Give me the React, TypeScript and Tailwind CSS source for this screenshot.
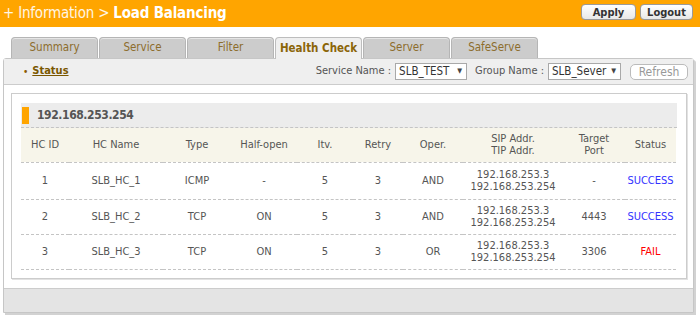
import React from "react";

const tabs = ["Summary", "Service", "Filter", "Health Check", "Server", "SafeServe"];

const rows = [
  { id: "1", name: "SLB_HC_1", type: "ICMP", half: "-", itv: "5", retry: "3", oper: "AND", port: "-", status: "SUCCESS", h: "h-[37px]" },
  { id: "2", name: "SLB_HC_2", type: "TCP", half: "ON", itv: "5", retry: "3", oper: "AND", port: "4443", status: "SUCCESS", h: "h-[35px]" },
  { id: "3", name: "SLB_HC_3", type: "TCP", half: "ON", itv: "5", retry: "3", oper: "OR", port: "3306", status: "FAIL", h: "h-[35px]" },
];

const widths = [48, 94, 68, 66, 56, 50, 60, 100, 62, 51];

export default function App() {
  return (
    <div className="w-[700px] h-[325px] bg-white overflow-hidden font-['DejaVu_Sans_Condensed','DejaVu_Sans',sans-serif] [font-stretch:condensed] text-[11px] text-[#555]">
      {/* Header */}
      <div className="h-[27px] bg-[#ffa500] flex items-center justify-between pl-[3px] pr-[7px]">
        <div className="text-[15px] leading-none text-white/90 tracking-[-0.2px]">
          + Information &gt; <span className="font-bold text-white">Load Balancing</span>
        </div>
        <div className="flex gap-[4px] mb-[3px]">
          <button className="w-[55px] h-[16px] rounded-[4px] border border-[#9a9a9a] bg-gradient-to-b from-white to-[#e8e8e8] text-[11px] font-bold text-[#333] leading-none flex items-center justify-center">
            Apply
          </button>
          <button className="w-[53px] h-[16px] rounded-[4px] border border-[#9a9a9a] bg-gradient-to-b from-white to-[#e8e8e8] text-[11px] font-bold text-[#333] leading-none flex items-center justify-center">
            Logout
          </button>
        </div>
      </div>

      {/* Tabs */}
      <div className="flex items-end gap-[1px] pl-[11px] mt-[10px] h-[21px] relative z-10">
        {tabs.map((t) =>
          t === "Health Check" ? (
            <div
              key={t}
              className="w-[87px] h-[22px] -mb-px rounded-t-[4px] border border-b-0 border-[#bdbdbd] bg-[#efefef] flex items-center justify-center text-[11.5px] font-bold text-[#8b6508]"
            >
              {t}
            </div>
          ) : (
            <div
              key={t}
              className="w-[87px] h-[21px] rounded-t-[4px] border border-b-0 border-[#b5b5b5] bg-[#cccccc] shadow-[inset_0_1px_0_#e6e6e6] flex items-center justify-center text-[11.5px] text-[#8c6d2c]"
            >
              {t}
            </div>
          )
        )}
      </div>

      {/* Panel */}
      <div className="ml-[3px] w-[691px] border border-[#c6c6c6] rounded-t-[3px] shadow-[2px_2px_0_#d2d2d2] bg-white">
        {/* Status bar */}
        <div className="h-[26px] bg-[#efefef] border-b border-[#cccccc] flex items-center pl-[19px] pr-[5px]">
          <div className="flex items-center gap-[4px]">
            <span className="text-[#8b5a00] text-[10px]">•</span>
            <span className="font-bold underline text-[#7a5700]">Status</span>
          </div>
          <div className="ml-auto flex items-center">
            <span className="text-[#555] mr-[4px]">Service Name :</span>
            <div className="w-[72px] h-[17px] border border-[#a9a9a9] bg-white flex items-center justify-between pl-[3px] pr-[4px] text-[11.5px] text-[#333] leading-none">
              <span>SLB_TEST</span>
              <span className="text-[7px] text-[#444]">▼</span>
            </div>
            <span className="text-[#555] ml-[8px] mr-[4px]">Group Name :</span>
            <div className="w-[73px] h-[17px] border border-[#a9a9a9] bg-white flex items-center justify-between pl-[3px] pr-[4px] text-[11.5px] text-[#333] leading-none">
              <span>SLB_Sever</span>
              <span className="text-[7px] text-[#444]">▼</span>
            </div>
            <button className="ml-[9px] w-[58px] h-[16px] rounded-[5px] border border-[#bbbbbb] bg-white text-[12px] text-[#999] leading-none flex items-center justify-center">
              Refresh
            </button>
          </div>
        </div>

        {/* Content */}
        <div className="pl-[7px] pr-[6px] pt-[8px] pb-[9px]">
          <div className="w-[676px] border border-[#cccccc] shadow-[1px_1px_0_#e2e2e2] px-[9px] pt-[9px] pb-[8px]">
            <div className="h-[25px] bg-[#ececec] border-b border-dashed border-[#c4c4c4] flex items-center">
              <div className="w-[7px] h-[17px] bg-[#ffa500] ml-[1px]" />
              <span className="ml-[8px] text-[12px] font-bold text-[#555] tracking-[-0.4px]">192.168.253.254</span>
            </div>
            <table className="w-[655px] table-fixed border-collapse text-center text-[11px] text-[#555]">
              <colgroup>
                {widths.map((w, i) => (
                  <col key={i} style={{ width: w }} />
                ))}
              </colgroup>
              <thead>
                <tr className="h-[34px] bg-[#f7f5ea] border-b border-dashed border-[#c4c4c4] leading-[12px]">
                  <th className="font-normal">HC ID</th>
                  <th className="font-normal">HC Name</th>
                  <th className="font-normal">Type</th>
                  <th className="font-normal">Half-open</th>
                  <th className="font-normal">Itv.</th>
                  <th className="font-normal">Retry</th>
                  <th className="font-normal">Oper.</th>
                  <th className="font-normal">
                    SIP Addr.
                    <br />
                    TIP Addr.
                  </th>
                  <th className="font-normal">
                    Target
                    <br />
                    Port
                  </th>
                  <th className="font-normal">Status</th>
                </tr>
              </thead>
              <tbody>
                {rows.map((r) => (
                  <tr key={r.id} className={`${r.h} border-b border-dashed border-[#c4c4c4] leading-[12px]`}>
                    <td>{r.id}</td>
                    <td>{r.name}</td>
                    <td>{r.type}</td>
                    <td>{r.half}</td>
                    <td>{r.itv}</td>
                    <td>{r.retry}</td>
                    <td>{r.oper}</td>
                    <td>
                      192.168.253.3
                      <br />
                      192.168.253.254
                    </td>
                    <td>{r.port}</td>
                    <td className={r.status === "FAIL" ? "text-[#ff0000]" : "text-[#3333ff]"}>{r.status}</td>
                  </tr>
                ))}
              </tbody>
            </table>
          </div>
        </div>

        {/* Bottom bar */}
        <div className="h-[24px] bg-[#e4e4e4] border-t border-[#cccccc]" />
      </div>
    </div>
  );
}
